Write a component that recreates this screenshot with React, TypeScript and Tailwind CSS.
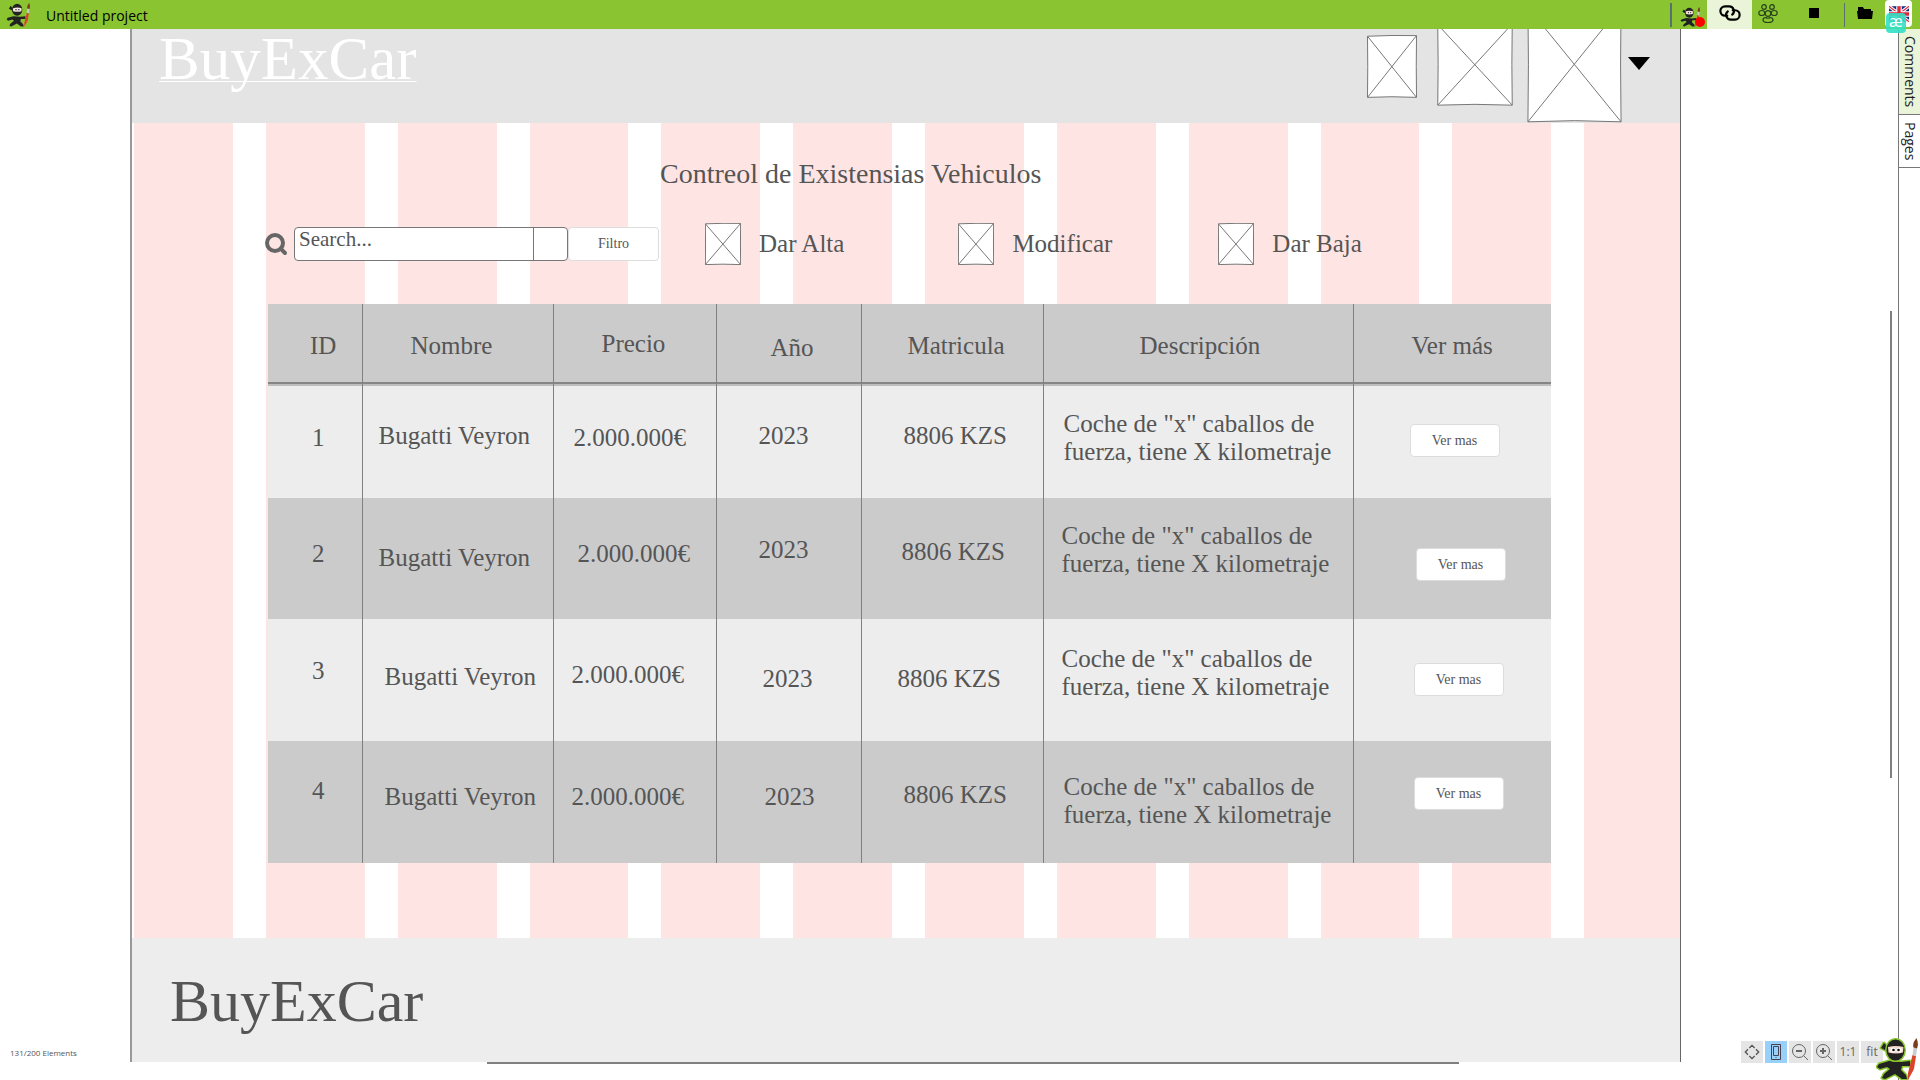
import React from "react";
import { Search } from "lucide-react";

const GRID = Array.from({ length: 12 }, (_, i) => i);

function Ninja({ className, outline }: { className?: string; outline?: boolean }) {
  return (
    <svg viewBox="0 0 42 42" className={className} aria-hidden="true">
      <g
        fill="#222"
        stroke={outline ? "#8ac531" : "none"}
        strokeWidth={outline ? 3 : 0}
        strokeLinejoin="round"
        style={{ paintOrder: "stroke" }}
      >
        <path d="M13 23L3 26L1 29L4 31L11 29L14 31L8 36L6 40L9 41L15 38L19 36L26 41L31 41L30 37L25 32L26 28L34 28L34 23L25 24Z" />
        <path d="M8 5L12 9L11 13L5 10Z" />
        <ellipse cx="19.5" cy="12" rx="9" ry="10.500" />
      </g>
      <path d="M12 9Q20 7 27.500 9L27 14.500Q20 16.500 12.500 14.500Z" fill="#f4d8c8" />
      <circle cx="17" cy="12" r="2.600" fill="#fff" />
      <circle cx="23" cy="12" r="2.600" fill="#fff" />
      <circle cx="17.500" cy="12" r="1.300" fill="#111" />
      <circle cx="22.500" cy="12" r="1.300" fill="#111" />
      <path d="M36.500 17L40 18L38 31L32 42L32 35Z" fill="#d9452b" />
      <path d="M37.500 9.500L41 10.500L40 18L36.500 17Z" fill="#c9ccd0" />
      <path d="M40.500 0Q43 6 41 10.500L37.500 9.500Q36 5 40.500 0Z" fill="#7a3e1d" />
    </svg>
  );
}

function Placeholder({ className }: { className: string }) {
  return (
    <svg viewBox="0 0 100 100" preserveAspectRatio="none" className={className} aria-hidden="true">
      <path
        d="M1 2Q50 0 99 1Q98 50 99 99Q50 97 1 99Q2 50 1 2ZM1 2L99 99M99 1L1 99"
        fill="#fff"
        stroke="#777"
        strokeWidth="1"
        vectorEffect="non-scaling-stroke"
      />
    </svg>
  );
}

function TopBar() {
  return (
    <header className="relative z-20 flex h-[29px] shrink-0 items-center bg-[#8ac531]">
      <Ninja className="ml-1.5 h-6 w-6" />
      <h1 className="ml-4 pt-0.5 font-['Open_Sans',sans-serif] text-sm text-black">Untitled project</h1>
      <nav className="ml-auto flex h-full items-center" aria-label="Project tools">
        <span className="h-6 w-0.5 bg-[#5b6f70]" />
        <button className="relative flex h-full w-[35px] items-center justify-center" aria-label="Record">
          <Ninja className="mt-1 h-5 w-5" />
          <span className="absolute right-0.5 bottom-0.5 h-2.5 w-2.5 rounded-full bg-[#ff0000]" />
        </button>
        <button className="flex h-full w-[45px] items-start justify-center bg-[#e9f4d9] pt-1" aria-label="Link">
          <svg viewBox="0 0 20 16" className="h-[18px] w-[22px]" fill="none" stroke="#000" strokeWidth="2" strokeLinecap="round">
            <path d="M7.500 10.500H5.500A4.250 4.250 0 0 1 5.500 2H9A4.250 4.250 0 0 1 12 9.500" />
            <path d="M12.500 5.500H14.500A4.250 4.250 0 0 1 14.500 14H11A4.250 4.250 0 0 1 8 6.500" />
          </svg>
        </button>
        <button className="flex h-full w-8 items-start justify-center pt-1" aria-label="Team">
          <svg viewBox="0 0 20 20" className="h-5 w-5" fill="none" stroke="#26401a" strokeWidth="1.200">
            <circle cx="6" cy="3" r="2.300" />
            <circle cx="14" cy="3" r="2.300" />
            <circle cx="10" cy="9.500" r="2.800" />
            <ellipse cx="3.800" cy="9" rx="3" ry="2.500" />
            <ellipse cx="16.200" cy="9" rx="3" ry="2.500" />
            <path d="M5 16Q5 13.500 8 13.500Q10 15 12 13.500Q15 13.500 15 16Q15 18.500 10 18.500Q5 18.500 5 16Z" />
          </svg>
        </button>
        <button className="flex h-full w-[60px] items-start justify-center pt-2" aria-label="Stop">
          <span className="h-2.5 w-2.5 bg-black" />
        </button>
        <span className="h-6 w-px bg-[#5b6f70]" />
        <button className="flex h-full w-10 items-start justify-center pt-1.5" aria-label="Open folder">
          <svg viewBox="0 0 16 14" className="h-3.5 w-4">
            <path d="M1 1H6L7 3H14V5H1ZM0 5H16L15 13H1Z" fill="#000" />
          </svg>
        </button>
        <button className="relative mr-2 flex h-full w-[27px] items-start" aria-label="Language">
          <span className="flex h-[27px] w-full items-start justify-center rounded bg-white pt-1.5">
            <svg viewBox="0 0 18 14" className="h-4 w-5">
              <path d="M0 0H18V14H0Z" fill="#112f80" />
              <path d="M0 0L18 14M18 0L0 14" stroke="#fff" strokeWidth="3" />
              <path d="M0 0L18 14M18 0L0 14" stroke="#e0263c" strokeWidth="1" />
              <path d="M9 0V14M0 7H18" stroke="#fff" strokeWidth="5" />
              <path d="M9 0V14M0 7H18" stroke="#e0263c" strokeWidth="3" />
            </svg>
          </span>
          <span className="absolute top-[13px] left-px h-5 w-5 rounded-sm bg-[#32dfc4]/90 text-center font-['Open_Sans',sans-serif] text-base leading-4 text-white">
            æ
          </span>
        </button>
      </nav>
    </header>
  );
}

type Cell = { text: string; pad: string };
type Row = { bg: string; cells: Cell[]; button: string };

const COLUMNS: Cell[] = [
  { text: "ID", pad: "pt-7 pl-10.5" },
  { text: "Nombre", pad: "pt-7 pl-12" },
  { text: "Precio", pad: "pt-6.5 pl-12" },
  { text: "Año", pad: "pt-7.5 pl-13.5" },
  { text: "Matricula", pad: "pt-7 pl-11.5" },
  { text: "Descripción", pad: "pt-7 pl-24" },
  { text: "Ver más", pad: "pt-7 pl-14.5" },
];

const COLUMN_WIDTHS = [94, 191, 163, 145, 182, 310, 198];

const DESCRIPTION = 'Coche de "x" caballos de fuerza, tiene X kilometraje';

const ROWS: Row[] = [
  {
    bg: "h-[112px] bg-[#ededed]",
    cells: [
      { text: "1", pad: "pt-9.5 pl-11" },
      { text: "Bugatti Veyron", pad: "pt-9 pl-4" },
      { text: "2.000.000€", pad: "pt-9.5 pl-5" },
      { text: "2023", pad: "pt-9 pl-10.5" },
      { text: "8806 KZS", pad: "pt-9 pl-10.5" },
      { text: DESCRIPTION, pad: "pt-6 pl-5" },
    ],
    button: "pt-9.5 pl-14",
  },
  {
    bg: "h-[121px] bg-[#cbcbcb]",
    cells: [
      { text: "2", pad: "pt-10.5 pl-11" },
      { text: "Bugatti Veyron", pad: "pt-11.5 pl-4" },
      { text: "2.000.000€", pad: "pt-10.5 pl-6" },
      { text: "2023", pad: "pt-9.5 pl-10.5" },
      { text: "8806 KZS", pad: "pt-10 pl-10" },
      { text: DESCRIPTION, pad: "pt-6 pl-4.5" },
    ],
    button: "pt-12.5 pl-15.5",
  },
  {
    bg: "h-[122px] bg-[#ededed]",
    cells: [
      { text: "3", pad: "pt-9.5 pl-11" },
      { text: "Bugatti Veyron", pad: "pt-11 pl-5.5" },
      { text: "2.000.000€", pad: "pt-10.5 pl-4.5" },
      { text: "2023", pad: "pt-11.5 pl-11.5" },
      { text: "8806 KZS", pad: "pt-11.5 pl-9" },
      { text: DESCRIPTION, pad: "pt-6.5 pl-4.5" },
    ],
    button: "pt-11 pl-15",
  },
  {
    bg: "h-[122px] bg-[#cbcbcb]",
    cells: [
      { text: "4", pad: "pt-9 pl-11" },
      { text: "Bugatti Veyron", pad: "pt-10.5 pl-5.5" },
      { text: "2.000.000€", pad: "pt-10.5 pl-4.5" },
      { text: "2023", pad: "pt-10.5 pl-12" },
      { text: "8806 KZS", pad: "pt-10 pl-10.5" },
      { text: DESCRIPTION, pad: "pt-8 pl-5" },
    ],
    button: "pt-9 pl-15",
  },
];

function StockTable() {
  const total = COLUMN_WIDTHS.reduce((a, b) => a + b, 0);
  return (
    <table className="w-full table-fixed border-collapse text-left text-[25px] leading-7">
      <colgroup>
        {COLUMN_WIDTHS.map((w, i) => (
          <col key={i} style={{ width: `${(w / total) * 100}%` }} />
        ))}
      </colgroup>
      <thead>
        <tr className="h-[82px] bg-[linear-gradient(to_bottom,#cbcbcb_78px,#858585_78px,#858585_80px,#bdbdbd_80px)]">
          {COLUMNS.map((c) => (
            <th key={c.text} scope="col" className="border-l border-[#808080] p-0 align-top font-normal first:border-l-0">
              <div className={c.pad}>{c.text}</div>
            </th>
          ))}
        </tr>
      </thead>
      <tbody>
        {ROWS.map((row, r) => (
          <tr key={r} className={row.bg}>
            {row.cells.map((c, i) => (
              <td key={i} className="border-l border-[#808080] p-0 align-top first:border-l-0">
                <div className={c.pad}>{c.text}</div>
              </td>
            ))}
            <td className="border-l border-[#808080] p-0 align-top">
              <div className={row.button}>
                <button className="block h-[33px] w-[90px] rounded border border-[#dcdcdc] bg-white text-sm">Ver mas</button>
              </div>
            </td>
          </tr>
        ))}
      </tbody>
    </table>
  );
}

function Action({ label, className }: { label: string; className: string }) {
  return (
    <button className={`flex items-center gap-4.5 text-[25px] leading-7 ${className}`}>
      <Placeholder className="h-[42px] w-9" />
      {label}
    </button>
  );
}

function Sheet() {
  return (
    <main className="flex min-w-0 flex-1 flex-col overflow-hidden border-r border-l-2 border-r-[#666] border-l-[#999] bg-white font-['Liberation_Serif',serif] text-[#555]">
      <div className="flex h-[94px] shrink-0 items-start bg-[#e4e4e4] pl-[27px]">
        <a
          href="#"
          className="text-[61px] leading-[60px] text-white underline decoration-1 underline-offset-2 [text-decoration-skip-ink:none]"
        >
          BuyExCar
        </a>
        <div className="ml-auto flex items-start pr-[30px]">
          <Placeholder className="mt-1.5 h-[63px] w-[50px]" />
          <Placeholder className="-mt-1.5 ml-5 h-[83px] w-[76px]" />
          <Placeholder className="-mt-6 ml-3.5 h-[118px] w-[95px]" />
          <button aria-label="Open menu" className="mt-7 ml-1.5">
            <svg viewBox="0 0 22 13" className="h-[13px] w-[22px]">
              <path d="M0 0H22L11 13Z" fill="#000" />
            </svg>
          </button>
        </div>
      </div>

      <section className="relative flex-1 pr-[129px] pl-[136px]">
        <div className="absolute inset-y-0 -right-[3px] left-0.5 grid grid-cols-12 gap-[33px]">
          {GRID.map((i) => (
            <div key={i} className="bg-[#ffe4e4]" />
          ))}
        </div>
        <div className="relative">
          <h2 className="pt-[35px] pl-[392px] text-[28px] leading-8">Contreol de Existensias Vehiculos</h2>
          <div className="mt-[33px] flex h-[42px] items-center">
            <label htmlFor="search" className="-ml-1">
              <Search className="h-6 w-6" strokeWidth={4} color="#666" />
            </label>
            <div className="ml-1.5 flex h-[34px] w-[274px] rounded border border-[#777] bg-white">
              <input
                id="search"
                aria-label="Search"
                placeholder="Search..."
                className="min-w-0 flex-1 pb-2.5 pl-1 text-[21px] leading-6 outline-none placeholder:text-[#555]"
              />
              <button aria-label="Search options" className="w-[34px] border-l border-[#777]" />
            </div>
            <button className="h-[34px] w-[91px] rounded border border-[#ddd] bg-white text-sm">Filtro</button>
            <Action label="Dar Alta" className="ml-[46px]" />
            <Action label="Modificar" className="ml-[114px]" />
            <Action label="Dar Baja" className="ml-[106px]" />
          </div>
          <div className="mt-[39px]">
            <StockTable />
          </div>
        </div>
      </section>

      <footer className="h-[124px] shrink-0 bg-[#ededed] pt-7 pl-[38px] text-[60px] leading-[70px]">BuyExCar</footer>
    </main>
  );
}

const TOOL = "flex h-[22px] w-[22px] items-center justify-center";

function ZoomTools() {
  return (
    <div className="flex gap-0.5 font-['Open_Sans',sans-serif] text-xs text-[#666]">
      <button className={`${TOOL} bg-[#e5e5e5]`} aria-label="Full screen">
        <svg viewBox="0 0 18 18" className="h-4 w-4" fill="none" stroke="#555" strokeWidth="1.500">
          <path d="M6 4.500L9 1.500L12 4.500M6 13.500L9 16.500L12 13.500M4.500 6L1.500 9L4.500 12M13.500 6L16.500 9L13.500 12" />
        </svg>
      </button>
      <button className={`${TOOL} bg-[#99d0f9]`} aria-label="Device">
        <svg viewBox="0 0 10 16" className="h-4 w-2.5" fill="none" stroke="#445" strokeWidth="1">
          <path d="M.5 .5H9.500V15.500H.5ZM2.500 2.500H7.500V11.500H2.500ZM4.500 13.500H5.500" />
        </svg>
      </button>
      <button className={`${TOOL} bg-[#e5e5e5]`} aria-label="Zoom out">
        <svg viewBox="0 0 18 18" className="h-[18px] w-[18px]" fill="none" stroke="#666">
          <circle cx="8" cy="8" r="6.500" />
          <path d="M13 13L17 17" />
          <path d="M5 8H11" strokeWidth="2" />
        </svg>
      </button>
      <button className={`${TOOL} bg-[#e5e5e5]`} aria-label="Zoom in">
        <svg viewBox="0 0 18 18" className="h-[18px] w-[18px]" fill="none" stroke="#666">
          <circle cx="8" cy="8" r="6.500" />
          <path d="M13 13L17 17" />
          <path d="M5 8H11M8 5V11" strokeWidth="2" />
        </svg>
      </button>
      <button className={`${TOOL} bg-[#e5e5e5]`}>1:1</button>
      <button className={`${TOOL} bg-[#e5e5e5]`}>fit</button>
    </div>
  );
}

export default function App() {
  return (
    <div className="relative flex h-screen flex-col overflow-hidden bg-white">
      <TopBar />
      <div className="flex min-h-0 flex-1">
        <div className="flex w-[130px] shrink-0 items-end pb-[21px] pl-2.5 font-['Open_Sans',sans-serif] text-[8px] leading-3 text-[#555]">
          131/200 Elements
        </div>
        <div className="flex min-w-0 flex-1 flex-col">
          <Sheet />
          <div className="h-[18px] shrink-0 pr-[222px] pl-[357px]">
            <div className="h-0.5 bg-[#808080]" />
          </div>
        </div>
        <div className="flex w-[239px] shrink-0 justify-end">
          <div className="mt-[282px] mr-1.5 h-[467px] w-0.5 bg-[#808080]" />
          <div className="flex w-[22px] flex-col border-l border-[#777] font-['Open_Sans',sans-serif] text-sm leading-5 text-[#222]">
            <button className="h-[86px] border-b border-[#777] bg-[#e9f4d9] [writing-mode:vertical-rl]">Comments</button>
            <button className="h-[53px] border-b border-[#777] [writing-mode:vertical-rl]">Pages</button>
          </div>
        </div>
      </div>
      <div className="absolute right-[37px] bottom-[17px]">
        <ZoomTools />
      </div>
      <Ninja outline className="absolute right-0.5 bottom-0 h-[42px] w-[42px]" />
    </div>
  );
}
